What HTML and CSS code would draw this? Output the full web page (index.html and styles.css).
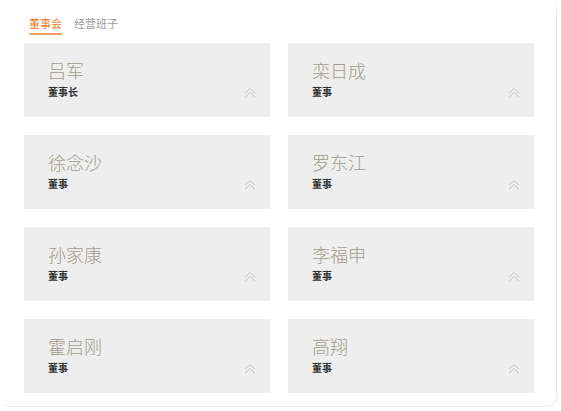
FILE: index.html
```html
<!DOCTYPE html>
<html lang="zh">
<head>
<meta charset="utf-8">
<link rel="stylesheet" href="styles.css">
</head>
<body>
<div class="panel">
  <div class="tabs">
    <span class="tab active">董事会</span>
    <span class="tab">经营班子</span>
  </div>
  <div class="grid">
    <div class="card"><div class="name">吕军</div><div class="role">董事长</div><svg class="chev" viewBox="0 0 12 11"><path d="M1 6 L6 1.5 L11 6 M1 10 L6 5.5 L11 10" fill="none" stroke="#c8c8c8" stroke-width="1"/></svg></div>
    <div class="card"><div class="name">栾日成</div><div class="role">董事</div><svg class="chev" viewBox="0 0 12 11"><path d="M1 6 L6 1.5 L11 6 M1 10 L6 5.5 L11 10" fill="none" stroke="#c8c8c8" stroke-width="1"/></svg></div>
    <div class="card"><div class="name">徐念沙</div><div class="role">董事</div><svg class="chev" viewBox="0 0 12 11"><path d="M1 6 L6 1.5 L11 6 M1 10 L6 5.5 L11 10" fill="none" stroke="#c8c8c8" stroke-width="1"/></svg></div>
    <div class="card"><div class="name">罗东江</div><div class="role">董事</div><svg class="chev" viewBox="0 0 12 11"><path d="M1 6 L6 1.5 L11 6 M1 10 L6 5.5 L11 10" fill="none" stroke="#c8c8c8" stroke-width="1"/></svg></div>
    <div class="card"><div class="name">孙家康</div><div class="role">董事</div><svg class="chev" viewBox="0 0 12 11"><path d="M1 6 L6 1.5 L11 6 M1 10 L6 5.5 L11 10" fill="none" stroke="#c8c8c8" stroke-width="1"/></svg></div>
    <div class="card"><div class="name">李福申</div><div class="role">董事</div><svg class="chev" viewBox="0 0 12 11"><path d="M1 6 L6 1.5 L11 6 M1 10 L6 5.5 L11 10" fill="none" stroke="#c8c8c8" stroke-width="1"/></svg></div>
    <div class="card"><div class="name">霍启刚</div><div class="role">董事</div><svg class="chev" viewBox="0 0 12 11"><path d="M1 6 L6 1.5 L11 6 M1 10 L6 5.5 L11 10" fill="none" stroke="#c8c8c8" stroke-width="1"/></svg></div>
    <div class="card"><div class="name">高翔</div><div class="role">董事</div><svg class="chev" viewBox="0 0 12 11"><path d="M1 6 L6 1.5 L11 6 M1 10 L6 5.5 L11 10" fill="none" stroke="#c8c8c8" stroke-width="1"/></svg></div>
  </div>
</div>
</body>
</html>
```
FILE: styles.css
```css
html, body {
  margin: 0;
  padding: 0;
  background: #ffffff;
  font-family: "Noto Sans CJK SC", "Noto Sans", sans-serif;
}
.panel {
  box-sizing: border-box;
  width: 557px;
  height: 407px;
  border: 1px solid #ececec;
  border-top-color: transparent;
  border-left-color: transparent;
  border-radius: 10px;
  padding: 12px 22px 0 23px;
}
.tabs {
  display: flex;
  gap: 12px;
  padding-left: 5px;
  height: 30px;
}
.tab {
  font-size: 11px;
  line-height: 16px;
  color: #9a9a9a;
  height: 18px;
  padding-top: 2px;
}
.tab.active {
  color: #e8802a;
  border-bottom: 2px solid #f0a060;
}
.grid {
  display: grid;
  grid-template-columns: 246px 246px;
  grid-auto-rows: 74px;
  column-gap: 18px;
  row-gap: 18px;
}
.card {
  position: relative;
  background: #eeeeee;
  padding: 14px 24px 0 24px;
}
.name {
  font-size: 18px;
  line-height: 26px;
  color: #a29c90;
  font-weight: 300;
}
.role {
  font-size: 10px;
  line-height: 14px;
  font-weight: 700;
  color: #333333;
  margin-top: 2px;
}
.chev {
  position: absolute;
  right: 14px;
  bottom: 19px;
  width: 12px;
  height: 11px;
}
```
